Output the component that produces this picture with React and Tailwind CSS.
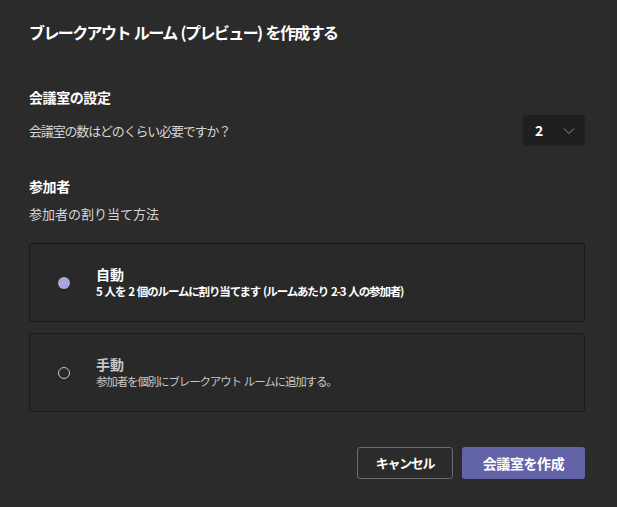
import React, { useState } from 'react';

const FONT = { fontFamily: '"Noto Sans CJK JP", "Noto Sans", sans-serif' };

function Radio({ checked }) {
  if (checked) {
    return <span className="block w-[12px] h-[12px] rounded-full bg-[#a6a7dc] shrink-0" />;
  }
  return <span className="block w-[12px] h-[12px] rounded-full border border-[#c8c8c8] shrink-0" />;
}

function Option({ checked, title, desc, onClick }) {
  return (
    <div
      onClick={onClick}
      className="h-[79px] flex items-center pl-[28px] border border-[#191919] rounded-[3px] bg-[#292929] cursor-pointer"
    >
      <Radio checked={checked} />
      <div className="ml-[26px] flex flex-col">
        <span className={`text-[14px] leading-[18px] font-bold ${checked ? 'text-white' : 'text-[#c8c8c8]'}`}>{title}</span>
        <span className={`text-[11.5px] leading-[17px] tracking-[-0.1em] [word-spacing:1.5px] ${checked ? 'text-white font-bold' : 'text-[#c8c8c8]'}`}>{desc}</span>
      </div>
    </div>
  );
}

export default function App() {
  const [mode, setMode] = useState('auto');

  return (
    <div style={FONT} className="w-[617px] h-[507px] bg-[#2b2b2b] text-white pl-[29px] pr-[32px] pt-[20px] flex flex-col overflow-hidden">
      <h1 className="text-[16px] leading-[24px] font-bold tracking-[-0.1em] [word-spacing:2px]">ブレークアウト ルーム (プレビュー) を作成する</h1>

      <h2 className="mt-[43px] text-[14px] leading-[20px] font-bold tracking-[-0.03em]">会議室の設定</h2>
      <div className="mt-[8px] flex items-center justify-between">
        <span className="text-[13px] leading-[20px] tracking-[-0.09em] text-[#d6d6d6]">会議室の数はどのくらい必要ですか？</span>
        <div className="w-[62px] h-[31px] bg-[#1f1f1f] rounded-[3px] flex items-center pl-[12px] pr-[10px] justify-between">
          <span className="text-[14px] font-bold">2</span>
          <svg width="12" height="8" viewBox="0 0 12 8" fill="none">
            <path d="M1 1.5 L6 6.5 L11 1.5" stroke="#8a8a8a" strokeWidth="1" />
          </svg>
        </div>
      </div>

      <h2 className="mt-[30px] text-[14px] leading-[20px] font-bold tracking-[-0.03em]">参加者</h2>
      <p className="mt-[8px] text-[13px] leading-[20px] text-[#d6d6d6]">参加者の割り当て方法</p>

      <div className="mt-[19px] flex flex-col gap-[11px]">
        <Option
          checked={mode === 'auto'}
          onClick={() => setMode('auto')}
          title="自動"
          desc="5 人を 2 個のルームに割り当てます (ルームあたり 2-3 人の参加者)"
        />
        <Option
          checked={mode === 'manual'}
          onClick={() => setMode('manual')}
          title="手動"
          desc="参加者を個別にブレークアウト ルームに追加する。"
        />
      </div>

      <div className="mt-[35px] flex justify-end gap-[9px]">
        <button className="w-[96px] h-[32px] border border-[#6b6b6b] rounded-[3px] text-[13px] tracking-[-0.1em] font-bold text-white">キャンセル</button>
        <button className="w-[123px] h-[32px] bg-[#6264a7] rounded-[3px] text-[14px] tracking-[-0.03em] font-bold text-white">会議室を作成</button>
      </div>
    </div>
  );
}
